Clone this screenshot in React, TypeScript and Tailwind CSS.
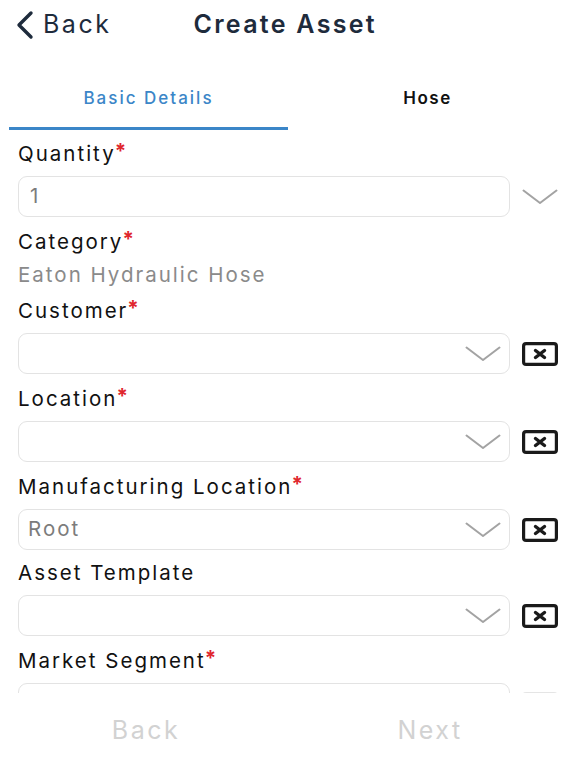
import React from "react";

const font = { fontFamily: "Inter, 'Noto Sans', sans-serif" };

function Chevron({ className }: { className?: string }) {
  return (
    <svg viewBox="0 0 36 16" className={className} fill="none">
      <path d="M1.5 1.5 L18 14 L34.5 1.5" stroke="currentColor" strokeWidth="2" strokeLinecap="round" strokeLinejoin="round" />
    </svg>
  );
}

function ClearBox({ faded }: { faded?: boolean }) {
  const c = faded ? "#e5e5e5" : "#1a1a1a";
  return (
    <svg viewBox="0 0 36 24" className="w-[36px] h-[24px]" fill="none">
      <rect x="1.6" y="1.6" width="32.8" height="20.8" rx="2.5" stroke={c} strokeWidth="3.2" />
      <path d="M13.5 8.5 L22.5 15.5 M22.5 8.5 L13.5 15.5" stroke={c} strokeWidth="3.4" strokeLinecap="round" />
    </svg>
  );
}

function Label({ text, required, className = "" }: { text: string; required?: boolean; className?: string }) {
  return (
    <div className={`h-[26px] leading-[26px] text-[20.5px] tracking-[2px] text-[#111] ${className}`}>
      {text}
      {required && <span className="text-[#e0262d] font-bold relative -top-[3px] -ml-[1px]">*</span>}
    </div>
  );
}

function SelectRow({ value, faded }: { value?: string; faded?: boolean }) {
  return (
    <div className="flex items-start mt-[9px]">
      <div className="w-[492px] h-[41px] border border-[#e3e3e3] rounded-[9px] flex items-center justify-between pl-[9px] pr-[8px]">
        <span className="text-[20.5px] tracking-[2px] text-[#7c7c7c]">{value ?? ""}</span>
        <Chevron className="w-[36px] h-[16px] text-[#a3a3a3]" />
      </div>
      <div className="ml-[12px] h-[41px] flex items-center">
        <ClearBox faded={faded} />
      </div>
    </div>
  );
}

export default function App() {
  return (
    <div className="w-[576px] h-[768px] bg-white flex flex-col overflow-hidden" style={font}>
      <div className="h-[693px] overflow-hidden">
        {/* Header */}
        <div className="h-[50px] flex items-center relative">
          <div className="flex items-center pl-[15px]">
            <svg viewBox="0 0 20 30" className="w-[20px] h-[30px]" fill="none">
              <path d="M16 3 L4 15 L16 27" stroke="#1e2b3c" strokeWidth="3.4" strokeLinecap="round" strokeLinejoin="round" />
            </svg>
            <span className="ml-[8px] text-[25px] tracking-[2.5px] text-[#1e2b3c]">Back</span>
          </div>
          <span className="ml-[82px] text-[25px] tracking-[2.3px] font-semibold text-[#1e2b3c]">Create Asset</span>
        </div>

        {/* Tabs */}
        <div className="mt-[29px] flex px-[9px]">
          <div className="w-[279px] flex flex-col items-center">
            <div className="h-[40px] flex items-center text-[17px] tracking-[2px] font-medium text-[#3b86c8]">Basic Details</div>
            <div className="mt-[8px] w-full h-[3px] bg-[#3b86c8]" />
          </div>
          <div className="flex-1 flex flex-col items-center">
            <div className="h-[40px] flex items-center text-[17px] tracking-[1.5px] font-semibold text-[#111]">Hose</div>
          </div>
        </div>

        {/* Form */}
        <div className="px-[18px] pt-[11px]">
          <Label text="Quantity" required />
          <div className="flex items-center mt-[9px]">
            <div className="w-[492px] h-[41px] border border-[#e3e3e3] rounded-[9px] flex items-center pl-[11px]">
              <span className="text-[20.5px] text-[#7c7c7c]">1</span>
            </div>
            <Chevron className="ml-[12px] w-[36px] h-[16px] text-[#a3a3a3]" />
          </div>

          <Label text="Category" required className="mt-[12px]" />
          <div className="mt-[7px] h-[26px] leading-[26px] text-[20.5px] tracking-[2px] text-[#8a8a8a]">Eaton Hydraulic Hose</div>

          <Label text="Customer" required className="mt-[10px]" />
          <SelectRow />

          <Label text="Location" required className="mt-[12px]" />
          <SelectRow />

          <Label text="Manufacturing Location" required className="mt-[12px]" />
          <SelectRow value="Root" />

          <Label text="Asset Template" className="mt-[10px]" />
          <SelectRow />

          <Label text="Market Segment" required className="mt-[12px]" />
          <SelectRow faded />
        </div>
      </div>

      {/* Footer */}
      <div className="h-[75px] flex items-center">
        <div className="w-[292px] text-center text-[25px] tracking-[2.5px] text-[#d2d2d2]">Back</div>
        <div className="flex-1 text-center text-[25px] tracking-[2.5px] text-[#d2d2d2] pr-[8px]">Next</div>
      </div>
    </div>
  );
}
